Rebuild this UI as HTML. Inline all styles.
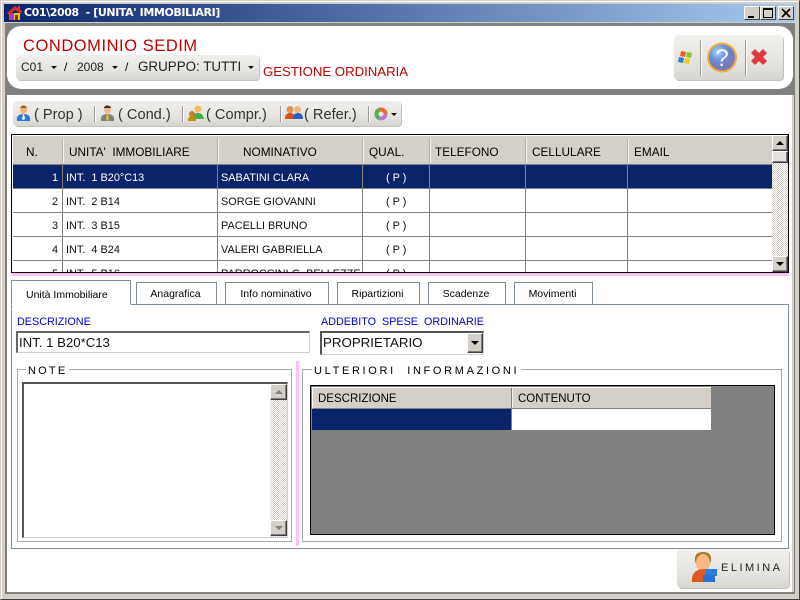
<!DOCTYPE html>
<html><head><meta charset="utf-8">
<style>
html,body{margin:0;padding:0;width:800px;height:600px;overflow:hidden;background:#d4d0c8}
*{box-sizing:border-box}
.a{position:absolute}
.t{position:absolute;white-space:pre;font-family:"Liberation Sans",sans-serif;font-size:12px;line-height:14px;color:#000}
.h{font-size:11.8px;top:145px}
.c{font-size:10.9px;color:#111}
.w{color:#fff}
.m{font-size:14.6px;line-height:16px;top:107px;color:#333}
.bar{position:absolute;background:linear-gradient(#f1f0ed,#e6e4e0 60%,#d8d6d0);border-radius:4px;box-shadow:1px 1px 0 #c4c2bc}
.sep{position:absolute;background:#9a9a9a;border-right:1px solid #fff;width:2px}
.cap{position:absolute;width:16px;height:14px;background:#d4d0c8;border:1px solid;border-color:#fff #404040 #404040 #fff}
.vl{position:absolute;width:1px;background:#808080}
.hl{position:absolute;height:1px;background:#808080}
.hs{position:absolute;top:138px;width:2px;height:25px;background:#f4f3f0;border-left:1px solid #b4b0a8}
.tab{position:absolute;top:282px;height:22px;background:#fff;border:1px solid #7f8d99;border-bottom:none;text-align:center;padding-right:2px;font-family:"Liberation Sans",sans-serif;font-size:10.5px;line-height:23px;color:#000}
.sb{position:absolute;background:repeating-conic-gradient(#d4d0c8 0 25%,#fff 0 50%) 0 0/2px 2px}
.btn{position:absolute;background:#d4d0c8;border:1px solid;border-color:#fff #404040 #404040 #fff;box-shadow:inset -1px -1px 0 #808080}
.dn{position:absolute;width:0;height:0;border:3px solid transparent;border-bottom:0;border-top:3px solid #111}
</style></head><body>
<div class="a" style="left:0;top:0;width:800px;height:600px;background:#d4d0c8;border:1px solid;border-color:#d4d0c8 #404040 #404040 #d4d0c8;box-shadow:inset 1px 1px 0 #fff"></div>
<!-- title -->
<div class="a" style="left:4px;top:4px;width:792px;height:18px;background:linear-gradient(90deg,#0a246a,#a6caf0)"></div>
<svg class="a" style="left:6px;top:5px" width="18" height="16" viewBox="0 0 18 16"><path d="M3 8h11v7H3z" fill="#f0c020"/><path d="M3 8h5v7H3z" fill="#b040b0"/><path d="M9 10h3v5H9z" fill="#7a3a10"/><path d="M1 8L9 1l7 5-1 3L9 5 3 10z" fill="#d8302a"/><path d="M12 1h2v4h-2z" fill="#d8302a"/></svg>
<div class="t" style="left:24px;top:6px;font-size:11px;font-weight:bold;color:#fff;font-family:'DejaVu Sans',sans-serif;letter-spacing:-.4px">C01\2008  - [UNITA' IMMOBILIARI]</div>
<div class="cap" style="left:744px;top:6px"><div class="a" style="left:3px;top:9px;width:6px;height:2px;background:#000"></div></div>
<div class="cap" style="left:760px;top:6px"><div class="a" style="left:2px;top:1px;width:10px;height:10px;border:1px solid #000;border-top-width:2px"></div></div>
<div class="cap" style="left:778px;top:6px"><svg class="a" style="left:2px;top:1px" width="11" height="10"><path d="M1 1l8 8M9 1l-8 8" stroke="#000" stroke-width="1.6"/></svg></div>
<!-- grey body -->
<div class="a" style="left:5px;top:23px;width:790px;height:571px;background:#808080"></div>
<div class="a" style="left:7px;top:26px;width:786px;height:63px;background:#fff;border-radius:14px"></div>
<div class="a" style="left:7px;top:95px;width:787px;height:497px;background:#fff"></div>
<div class="a" style="left:792px;top:95px;width:2px;height:497px;background:#d4d0c8"></div>
<!-- header -->
<div class="t" style="left:23px;top:37px;font-size:16.5px;line-height:18px;color:#c00000;letter-spacing:.55px">CONDOMINIO SEDIM</div>
<div class="bar" style="left:16px;top:55px;width:243px;height:25px"></div>
<div class="t" style="left:21px;top:60px;font-size:12px;color:#222">C01</div>
<div class="dn" style="left:51px;top:66px"></div>
<div class="t" style="left:64px;top:60px">/</div>
<div class="t" style="left:77px;top:60px;font-size:12px;color:#222">2008</div>
<div class="dn" style="left:112px;top:66px"></div>
<div class="t" style="left:125px;top:60px">/</div>
<div class="t" style="left:138px;top:60px;font-size:13.4px;color:#222">GRUPPO: TUTTI</div>
<div class="dn" style="left:248px;top:66px"></div>
<div class="t" style="left:263px;top:65px;font-size:13.2px;color:#c00000">GESTIONE ORDINARIA</div>
<div class="bar" style="left:674px;top:35px;width:109px;height:45px"></div>
<div class="sep" style="left:700px;top:40px;height:36px"></div>
<div class="sep" style="left:745px;top:40px;height:36px"></div>
<svg class="a" style="left:677px;top:49px" width="18" height="16" viewBox="0 0 18 16"><path d="M4 2l5 1-1 5-5-1z" fill="#ee5a2a"/><path d="M10 3l5 1-1 5-5-1z" fill="#8cc820"/><path d="M2 8l5 1-1 5-5-1z" fill="#2a80d0"/><path d="M8 9l5 1-1 5-5-1z" fill="#f0c820"/></svg>
<svg class="a" style="left:706px;top:41px" width="32" height="33" viewBox="0 0 32 33"><defs><radialGradient id="g" cx=".35" cy=".3"><stop offset="0" stop-color="#b0d4f4"/><stop offset=".6" stop-color="#6a90dc"/><stop offset="1" stop-color="#7a7ab8"/></radialGradient></defs><circle cx="16" cy="16.500" r="14" fill="url(#g)" stroke="#f0b040" stroke-width="2"/><text x="16" y="25" text-anchor="middle" font-family="Liberation Sans" font-size="24" fill="#f4f8ff">?</text></svg>
<svg class="a" style="left:750px;top:48px" width="18" height="18" viewBox="0 0 18 18"><path d="M1 5l4-4 4 4 4-4 4 4-4 4 4 4-4 4-4-4-4 4-4-4 4-4z" fill="#e0383c"/></svg>
<!-- toolbar -->
<div class="bar" style="left:13px;top:101px;width:388px;height:25px"></div>
<svg class="a" style="left:16px;top:104px" width="15" height="18" viewBox="0 0 15 18"><ellipse cx="7.500" cy="5.500" rx="3.500" ry="4.500" fill="#f0b070"/><path d="M4 4q3.500-5 7 0z" fill="#a06020"/><path d="M1 17q-1-7 6.500-7t6.500 7z" fill="#2a78d8"/><path d="M7 10h1l1 5-1.500 1-1.500-1z" fill="#fff"/></svg>
<div class="t m" style="left:34px">( Prop )</div>
<div class="sep" style="left:94px;top:106px;height:16px"></div>
<svg class="a" style="left:100px;top:104px" width="15" height="18" viewBox="0 0 15 18"><ellipse cx="7.500" cy="5.500" rx="3.500" ry="4.500" fill="#f0b890"/><path d="M3.500 4q4-5 8 0z" fill="#333"/><path d="M1 17q-1-7 6.500-7t6.500 7z" fill="#808080"/><path d="M7 10h1l1 5-1.500 2-1.500-2z" fill="#e0c030"/></svg>
<div class="t m" style="left:118px">( Cond.)</div>
<div class="sep" style="left:182px;top:106px;height:16px"></div>
<svg class="a" style="left:187px;top:104px" width="18" height="18" viewBox="0 0 18 18"><circle cx="11" cy="5" r="3.500" fill="#f0c060"/><path d="M6 15q0-6 5-6t6 6z" fill="#40b040"/><circle cx="5" cy="10" r="3" fill="#c88030"/><path d="M1 17q0-5 4-5t4 5z" fill="#c09010"/></svg>
<div class="t m" style="left:206px">( Compr.)</div>
<div class="sep" style="left:280px;top:106px;height:16px"></div>
<svg class="a" style="left:285px;top:104px" width="18" height="18" viewBox="0 0 18 18"><circle cx="5" cy="5.500" r="3.500" fill="#e89050"/><path d="M0 15q0-6 5-6t5 6z" fill="#d85020"/><circle cx="12.500" cy="5.500" r="3.500" fill="#f0b880"/><path d="M8 15q0-6 5-6t5 6z" fill="#2a60c0"/></svg>
<div class="t m" style="left:304px">( Refer.)</div>
<div class="sep" style="left:368px;top:106px;height:16px"></div>
<svg class="a" style="left:374px;top:107px" width="14" height="14" viewBox="0 0 14 14"><circle cx="7" cy="7" r="4.500" fill="none" stroke="#b878c8" stroke-width="4" stroke-dasharray="9 20"/><circle cx="7" cy="7" r="4.500" fill="none" stroke="#50b050" stroke-width="4" stroke-dasharray="10 28" stroke-dashoffset="-9"/><circle cx="7" cy="7" r="4.500" fill="none" stroke="#e07030" stroke-width="4" stroke-dasharray="9 28" stroke-dashoffset="-19"/></svg>
<div class="dn" style="left:391px;top:113px"></div>
<!-- grid -->
<div class="a" style="left:11px;top:134px;width:778px;height:139px;border:1px solid #000;background:#fff;overflow:hidden"></div>
<div class="a" style="left:13px;top:136px;width:759px;height:28px;background:#d4d0c8"></div>
<div class="a" style="left:13px;top:164px;width:759px;height:1px;background:#808080"></div>
<div class="a" style="left:13px;top:165px;width:759px;height:23px;background:#0a246a"></div>
<div class="hl" style="left:13px;top:188px;width:759px"></div>
<div class="hl" style="left:13px;top:212px;width:759px"></div>
<div class="hl" style="left:13px;top:236px;width:759px"></div>
<div class="hl" style="left:13px;top:260px;width:759px"></div>
<div class="vl" style="left:62px;top:165px;height:107px"></div><div class="hs" style="left:62px"></div>
<div class="vl" style="left:217px;top:165px;height:107px"></div><div class="hs" style="left:217px"></div>
<div class="vl" style="left:362px;top:165px;height:107px"></div><div class="hs" style="left:362px"></div>
<div class="vl" style="left:429px;top:165px;height:107px"></div><div class="hs" style="left:429px"></div>
<div class="vl" style="left:525px;top:165px;height:107px"></div><div class="hs" style="left:525px"></div>
<div class="vl" style="left:627px;top:165px;height:107px"></div><div class="hs" style="left:627px"></div>
<div class="t h" style="left:26px">N.</div>
<div class="t h" style="left:69px">UNITA'  IMMOBILIARE</div>
<div class="t h" style="left:243px">NOMINATIVO</div>
<div class="t h" style="left:369px">QUAL.</div>
<div class="t h" style="left:435px">TELEFONO</div>
<div class="t h" style="left:532px">CELLULARE</div>
<div class="t h" style="left:634px">EMAIL</div>
<div class="t c w" style="left:52px;top:171px">1</div>
<div class="t c w" style="left:66px;top:171px">INT.  1 B20°C13</div>
<div class="t c w" style="left:221px;top:171px">SABATINI CLARA</div>
<div class="t c w" style="left:386px;top:171px">( P )</div>
<div class="t c" style="left:52px;top:195px">2</div>
<div class="t c" style="left:66px;top:195px">INT.  2 B14</div>
<div class="t c" style="left:221px;top:195px">SORGE GIOVANNI</div>
<div class="t c" style="left:386px;top:195px">( P )</div>
<div class="t c" style="left:52px;top:219px">3</div>
<div class="t c" style="left:66px;top:219px">INT.  3 B15</div>
<div class="t c" style="left:221px;top:219px">PACELLI BRUNO</div>
<div class="t c" style="left:386px;top:219px">( P )</div>
<div class="t c" style="left:52px;top:243px">4</div>
<div class="t c" style="left:66px;top:243px">INT.  4 B24</div>
<div class="t c" style="left:221px;top:243px">VALERI GABRIELLA</div>
<div class="t c" style="left:386px;top:243px">( P )</div>
<div class="a" style="left:13px;top:261px;width:759px;height:11px;overflow:hidden">
<div class="t c" style="left:39px;top:6px">5</div>
<div class="t c" style="left:53px;top:6px">INT.  5 B16</div>
<div class="t c" style="left:208px;top:6px">PARROCCINI G. BELLEZZE</div>
<div class="t c" style="left:373px;top:6px">( P )</div>
</div>
<div class="a" style="left:11px;top:272px;width:778px;height:1px;background:#000"></div>
<div class="a" style="left:11px;top:273px;width:778px;height:3px;background:#ffc0f4"></div>
<!-- grid scrollbar -->
<div class="sb" style="left:772px;top:135px;width:16px;height:137px"></div>
<div class="btn" style="left:772px;top:135px;width:16px;height:16px"><div class="a" style="left:3px;top:5px;border:4px solid transparent;border-top:0;border-bottom:4px solid #000"></div></div>
<div class="btn" style="left:772px;top:151px;width:16px;height:12px;background:#e4e2dc"></div>
<div class="btn" style="left:772px;top:256px;width:16px;height:16px"><div class="a" style="left:3px;top:5px;border:4px solid transparent;border-bottom:0;border-top:4px solid #000"></div></div>
<!-- tabs -->
<div class="a" style="left:11px;top:304px;width:778px;height:245px;border:1px solid #7f8d99;background:#fff"></div>
<div class="tab" style="left:11px;top:280px;width:120px;height:25px;line-height:28px;border-bottom:1px solid #fff;text-align:left;padding:0 0 0 14px">Unità Immobiliare</div>
<div class="tab" style="left:136px;width:81px">Anagrafica</div>
<div class="tab" style="left:225px;width:104px">Info nominativo</div>
<div class="tab" style="left:337px;width:83px">Ripartizioni</div>
<div class="tab" style="left:428px;width:78px">Scadenze</div>
<div class="tab" style="left:514px;width:79px">Movimenti</div>
<!-- form -->
<div class="t" style="left:17px;top:315px;color:#0000c8;font-size:10.800px">DESCRIZIONE</div>
<div class="t" style="left:321px;top:315px;color:#0000c8;font-size:10.800px">ADDEBITO  SPESE  ORDINARIE</div>
<div class="a" style="left:16px;top:331px;width:294px;height:22px;border:1px solid;border-width:2px 1px 1px 2px;border-color:#666 #d4d0c8 #d4d0c8 #666;background:#fff"></div>
<div class="t" style="left:19px;top:336px;font-size:13.2px;color:#111">INT. 1 B20*C13</div>
<div class="a" style="left:320px;top:331px;width:164px;height:24px;border:1px solid;border-width:2px 1px 1px 2px;border-color:#555 #d4d0c8 #d4d0c8 #555;background:#fff"></div>
<div class="t" style="left:323px;top:336px;font-size:13.3px;color:#111">PROPRIETARIO</div>
<div class="btn" style="left:467px;top:333px;width:16px;height:20px"><div class="a" style="left:3px;top:7px;border:4px solid transparent;border-bottom:0;border-top:4px solid #000"></div></div>
<!-- note -->
<div class="a" style="left:17px;top:369px;width:275px;height:173px;border:1px solid #a8a8a8"></div>
<div class="t" style="left:26px;top:364px;background:#fff;padding:0 2px 0 2px;font-size:11px;letter-spacing:2.200px">NOTE</div>
<div class="a" style="left:22px;top:382px;width:266px;height:156px;border:1px solid;border-width:2px 1px 1px 2px;border-color:#555 #d4d0c8 #d4d0c8 #555;background:#fff"></div>
<div class="sb" style="left:270px;top:384px;width:17px;height:153px"></div>
<div class="btn" style="left:270px;top:384px;width:17px;height:16px"><div class="a" style="left:4px;top:5px;border:4px solid transparent;border-top:0;border-bottom:4px solid #808080"></div></div>
<div class="btn" style="left:270px;top:520px;width:17px;height:16px"><div class="a" style="left:4px;top:5px;border:4px solid transparent;border-bottom:0;border-top:4px solid #808080"></div></div>
<!-- pink divider -->
<div class="a" style="left:296px;top:361px;width:3px;height:185px;background:#ffc0f4"></div>
<!-- info -->
<div class="a" style="left:302px;top:369px;width:480px;height:173px;border:1px solid #a8a8a8"></div>
<div class="t" style="left:312px;top:364px;background:#fff;padding:0 2px 0 2px;font-size:11px;letter-spacing:2.660px">ULTERIORI  INFORMAZIONI</div>
<div class="a" style="left:310px;top:385px;width:465px;height:150px;border:1px solid #000;background:#808080"></div>
<div class="a" style="left:312px;top:387px;width:399px;height:22px;background:#d4d0c8;border-bottom:1px solid #808080;border-left:1px solid #fff;border-top:1px solid #fff"></div>
<div class="a" style="left:511px;top:388px;width:2px;height:20px;background:#f4f3f0;border-left:1px solid #808080"></div>
<div class="t" style="left:318px;top:392px;font-size:11.500px">DESCRIZIONE</div>
<div class="t" style="left:518px;top:392px;font-size:11.500px">CONTENUTO</div>
<div class="a" style="left:312px;top:409px;width:199px;height:21px;background:#0a246a"></div>
<div class="a" style="left:512px;top:409px;width:199px;height:21px;background:#fff"></div>
<!-- elimina -->
<div class="bar" style="left:677px;top:549px;width:112px;height:39px"></div>
<svg class="a" style="left:690px;top:550px" width="30" height="34" viewBox="0 0 30 34"><path d="M5 11q-1-9 8-9 9 0 8 9l-2 5H7z" fill="#a87a20"/><ellipse cx="13" cy="13" rx="7" ry="9" fill="#f8b880"/><path d="M2 32q-1-12 11-13 7 0 10 6l-4 7z" fill="#d85a20"/><path d="M16 19h11v7H16z" fill="#2a80e0"/><path d="M13 25h12v7H13z" fill="#2a70d8"/></svg>
<div class="t" style="left:721px;top:561px;font-size:11px;letter-spacing:2.500px;color:#222">ELIMINA</div>
</body></html>
